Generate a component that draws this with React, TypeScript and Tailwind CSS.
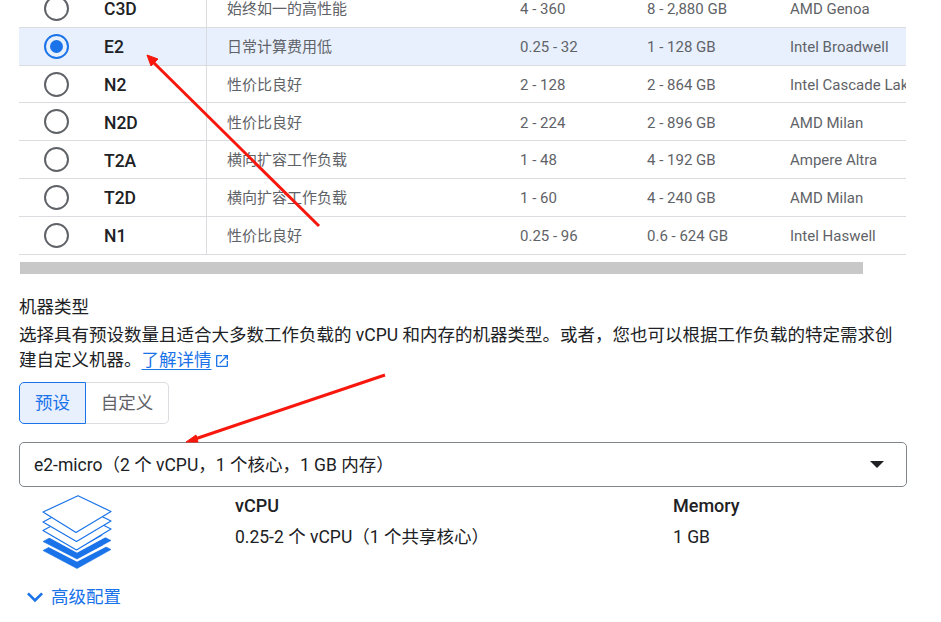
const rows = [
  { name: 'C3D', desc: '始终如一的高性能', vcpu: '4 - 360', mem: '8 - 2,880 GB', cpu: 'AMD Genoa' },
  { name: 'E2', desc: '日常计算费用低', vcpu: '0.25 - 32', mem: '1 - 128 GB', cpu: 'Intel Broadwell', selected: true },
  { name: 'N2', desc: '性价比良好', vcpu: '2 - 128', mem: '2 - 864 GB', cpu: 'Intel Cascade Lake' },
  { name: 'N2D', desc: '性价比良好', vcpu: '2 - 224', mem: '2 - 896 GB', cpu: 'AMD Milan' },
  { name: 'T2A', desc: '横向扩容工作负载', vcpu: '1 - 48', mem: '4 - 192 GB', cpu: 'Ampere Altra' },
  { name: 'T2D', desc: '横向扩容工作负载', vcpu: '1 - 60', mem: '4 - 240 GB', cpu: 'AMD Milan' },
  { name: 'N1', desc: '性价比良好', vcpu: '0.25 - 96', mem: '0.6 - 624 GB', cpu: 'Intel Haswell' },
]

function Radio({ checked }: { checked?: boolean }) {
  return (
    <div
      className={`w-[25px] h-[25px] rounded-full border-2 flex items-center justify-center ${
        checked ? 'border-[#1a73e8]' : 'border-[#5f6368]'
      }`}
    >
      {checked && <div className="w-[13px] h-[13px] rounded-full bg-[#1a73e8]" />}
    </div>
  )
}

function LayersIcon() {
  return (
    <svg width="70" height="74" viewBox="0 0 70 74" fill="none" className="block">
      <path d="M1 55.5 L35 37 L69 54.5 L35 73.5 Z" fill="#1a73e8" stroke="#1a73e8" strokeWidth="0.6" strokeLinejoin="round" />
      <path d="M0 47 L35 65 L70 47" stroke="#fff" strokeWidth="3" />
      <path d="M1 46.5 L35 28 L69 45.5 L35 64 Z" fill="#1a73e8" stroke="#1a73e8" strokeWidth="0.6" strokeLinejoin="round" />
      <path d="M0 37 L35 56 L70 37" stroke="#fff" strokeWidth="3" />
      <path d="M1 35.5 L35 17 L69 34 L34.5 55 Z" fill="#fff" stroke="#1a73e8" strokeWidth="1.2" strokeLinejoin="round" />
      <path d="M1 27 L35 9 L69 26 L34.5 46.5 Z" fill="#fff" stroke="#1a73e8" strokeWidth="1.2" strokeLinejoin="round" />
      <path d="M1 17 L36 0.8 L69 16.5 L34 37.5 Z" fill="#fff" stroke="#1a73e8" strokeWidth="1.2" strokeLinejoin="round" />
    </svg>
  )
}

export default function App() {
  return (
    <div className="relative w-[941px] h-[622px] overflow-hidden bg-white font-['Roboto','Noto_Sans_CJK_SC',sans-serif] text-[#202124]">
      <div className="ml-[19px] w-[887px] mt-[-10px] overflow-hidden">
        {rows.map((r) => (
          <div
            key={r.name}
            className={`flex items-center h-[37.83px] border-b border-[#dadce0] whitespace-nowrap ${
              r.selected ? 'bg-[#e8f0fe]' : ''
            }`}
          >
            <div className="w-[188px] h-full flex items-center border-r border-[#dadce0] shrink-0">
              <div className="w-[85px] pl-[25px] shrink-0">
                <Radio checked={r.selected} />
              </div>
              <span className="pt-[2px] text-[17.5px] font-medium">{r.name}</span>
            </div>
            <div className="w-[313px] pl-[20px] pt-[2px] shrink-0 text-[15px] text-[#5f6368]">{r.desc}</div>
            <div className="w-[127px] pt-[2px] shrink-0 text-[15px] text-[#5f6368]">{r.vcpu}</div>
            <div className="w-[143px] pt-[2px] shrink-0 text-[15px] text-[#5f6368]">{r.mem}</div>
            <div className="pt-[2px] shrink-0 text-[15px] text-[#5f6368]">{r.cpu}</div>
          </div>
        ))}
      </div>

      <div className="ml-[20px] mt-[7px] w-[843px] h-[12px] bg-[#c8c8c8]" />

      <div className="mx-[19px] mt-[21px] text-[17.5px]">
        <div className="leading-[24px]">机器类型</div>
        <p className="w-[887px] leading-[25px] mt-[4px]">
          选择具有预设数量且适合大多数工作负载的 vCPU 和内存的机器类型。或者，您也可以根据工作负载的特定需求创建自定义机器。
          <a className="text-[#1a73e8] underline underline-offset-[3px]">了解详情</a>
          <svg viewBox="0 0 24 24" fill="#1a73e8" className="inline-block w-[16px] h-[16px] ml-[2px] mb-[1px]">
            <path d="M19 19H5V5h7V3H5a2 2 0 0 0-2 2v14a2 2 0 0 0 2 2h14c1.1 0 2-.9 2-2v-7h-2v7zM14 3v2h3.59l-9.83 9.83 1.41 1.41L19 6.41V10h2V3h-7z" />
          </svg>
        </p>

        <div className="flex mt-[9px] h-[42px] w-[150px]">
          <div className="w-[67px] flex items-center justify-center rounded-l-[5px] border border-[#1a73e8] bg-[#e8f0fe] text-[#1a73e8]">
            预设
          </div>
          <div className="flex-1 flex items-center justify-center rounded-r-[5px] border border-l-0 border-[#dadce0] text-[#5f6368]">
            自定义
          </div>
        </div>

        <div className="flex items-center justify-between mt-[18px] w-[888px] h-[45px] pl-[14px] pr-[22px] border border-[#80868b] rounded-[5px]">
          <span className="pt-[2px]">e2-micro（2 个 vCPU，1 个核心，1 GB 内存）</span>
          <div className="w-0 h-0 border-x-[7px] border-x-transparent border-t-[7px] border-t-[#202124]" />
        </div>

        <div className="flex mt-[8px] h-[74px]">
          <div className="w-[216px] pl-[23px] shrink-0">
            <LayersIcon />
          </div>
          <div className="w-[438px] shrink-0">
            <div className="text-[18px] font-medium leading-[22px]">vCPU</div>
            <div className="leading-[24px] mt-[8px]">0.25-2 个 vCPU（1 个共享核心）</div>
          </div>
          <div>
            <div className="text-[18px] font-medium leading-[22px]">Memory</div>
            <div className="leading-[24px] mt-[8px]">1 GB</div>
          </div>
        </div>

        <div className="flex items-center mt-[16px] text-[#1a73e8] leading-[24px]">
          <svg viewBox="0 0 24 24" fill="#1a73e8" className="w-[32px] h-[32px] my-[-4px] shrink-0">
            <path d="M16.59 8.59 12 13.17 7.41 8.59 6 10l6 6 6-6z" />
          </svg>
          高级配置
        </div>
      </div>

      <svg className="absolute left-0 top-0 pointer-events-none" width="941" height="622" fill="none">
        <path d="M319 226 L150 59" stroke="#f8170d" strokeWidth="3" />
        <path d="M147 55 L158 59 L151 66 Z" fill="#f8170d" stroke="#f8170d" strokeWidth="1" />
        <path d="M385 375 L192 440" stroke="#f8170d" strokeWidth="3" />
        <path d="M186 442 L196 435 L198 442 Z" fill="#f8170d" stroke="#f8170d" strokeWidth="1" />
      </svg>
    </div>
  )
}
